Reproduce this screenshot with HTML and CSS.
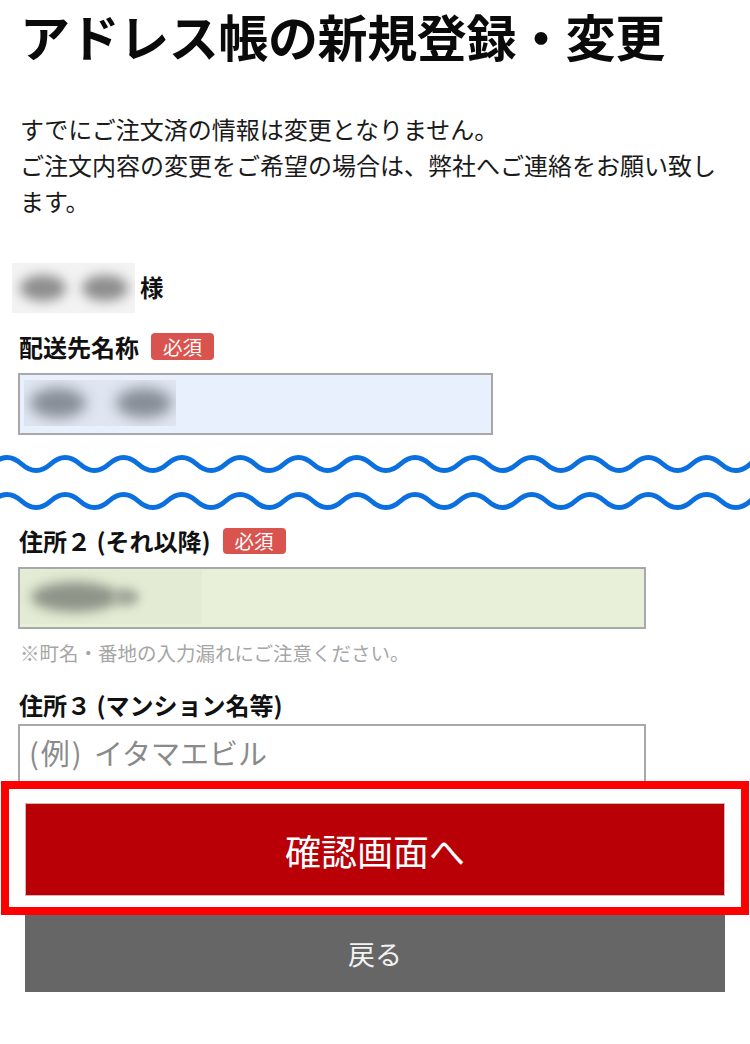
FILE: index.html
```html
<!DOCTYPE html>
<html lang="ja">
<head>
<meta charset="utf-8">
<title>アドレス帳の新規登録・変更</title>
<link rel="stylesheet" href="styles.css">
</head>
<body>
<main class="page">
  <h1 class="title">アドレス帳の新規登録・変更</h1>
  <p class="lead">すでにご注文済の情報は変更となりません。<br>ご注文内容の変更をご希望の場合は、弊社へご連絡をお願い致します。</p>

  <div class="customer">
    <div class="blur-box blur-box--name"><span class="blob blob--name"></span><span class="blob blob--name"></span></div>
    <span class="customer__suffix">様</span>
  </div>

  <div class="field-label field-label--first">
    <span class="field-label__text">配送先名称</span>
    <span class="badge">必須</span>
  </div>
  <div class="control control--autofill control--short">
    <div class="blur-box blur-box--input"><span class="blob blob--input"></span><span class="blob blob--input"></span></div>
  </div>

  <svg class="waves" viewBox="0 0 750 70" width="750" height="70" aria-hidden="true">
    <path d="M-7.6 17 q14.575 -13 29.15 0 t29.15 0 t29.15 0 t29.15 0 t29.15 0 t29.15 0 t29.15 0 t29.15 0 t29.15 0 t29.15 0 t29.15 0 t29.15 0 t29.15 0 t29.15 0 t29.15 0 t29.15 0 t29.15 0 t29.15 0 t29.15 0 t29.15 0 t29.15 0 t29.15 0 t29.15 0 t29.15 0 t29.15 0 t29.15 0 t29.15 0 t29.15 0"/>
    <path d="M-7.6 54 q14.575 -13 29.15 0 t29.15 0 t29.15 0 t29.15 0 t29.15 0 t29.15 0 t29.15 0 t29.15 0 t29.15 0 t29.15 0 t29.15 0 t29.15 0 t29.15 0 t29.15 0 t29.15 0 t29.15 0 t29.15 0 t29.15 0 t29.15 0 t29.15 0 t29.15 0 t29.15 0 t29.15 0 t29.15 0 t29.15 0 t29.15 0 t29.15 0 t29.15 0"/>
  </svg>

  <div class="field-label field-label--second">
    <span class="field-label__text">住所２ (それ以降)</span>
    <span class="badge">必須</span>
  </div>
  <div class="control control--filled control--wide">
    <div class="blur-box blur-box--addr"><span class="blob blob--addr"></span><span class="blob blob--addr-small"></span></div>
  </div>
  <p class="note">※町名・番地の入力漏れにご注意ください。</p>

  <div class="field-label field-label--third">
    <span class="field-label__text">住所３ (マンション名等)</span>
  </div>
  <div class="control control--empty control--wide">
    <span class="placeholder"><span class="placeholder__ex">(例)</span> イタマエビル</span>
  </div>

  <div class="highlight">
    <button class="btn btn--primary" type="button">確認画面へ</button>
  </div>
  <button class="btn btn--back" type="button">戻る</button>
</main>
</body>
</html>
```

FILE: styles.css
```css
html, body {
  margin: 0;
  padding: 0;
  background: #ffffff;
}

body {
  font-family: "Noto Sans CJK JP", "Noto Sans", sans-serif;
  color: #111111;
  width: 750px;
  overflow: hidden;
}

.page {
  display: flex;
  flex-direction: column;
  align-items: flex-start;
}

.title {
  margin: 0;
  padding: 5px 20px 0;
  font-size: 50px;
  line-height: 60px;
  font-weight: 700;
  color: #0a0a0a;
  letter-spacing: -0.4px;
  white-space: nowrap;
}

.lead {
  margin: 46px 0 0;
  padding: 0 30px 0 20px;
  width: 700px;
  font-size: 24px;
  line-height: 36px;
  color: #1a1a1a;
}

.customer {
  margin-top: 44px;
  padding-left: 12px;
  display: flex;
  align-items: center;
  gap: 5px;
}

.customer__suffix {
  font-size: 23.5px;
  font-weight: 700;
  line-height: 1;
  color: #111;
}

.blur-box {
  display: flex;
  align-items: center;
  overflow: hidden;
}

.blur-box--name {
  width: 123px;
  height: 50px;
  background: #f3f3f3;
  padding-left: 8px;
  gap: 16px;
  box-sizing: border-box;
}

.blob {
  display: block;
  border-radius: 50%;
  flex: none;
}

.blob--name {
  width: 46px;
  height: 26px;
  background: #8e8e8e;
  filter: blur(6px);
}

.field-label {
  display: flex;
  align-items: center;
  gap: 12px;
  padding-left: 19px;
  min-height: 27px;
}

.field-label__text {
  font-size: 24px;
  font-weight: 700;
  line-height: 1;
  color: #111;
}

.field-label--first {
  margin-top: 20px;
}

.field-label--second {
  margin-top: 11px;
  min-height: 26px;
}

.field-label--third {
  margin-top: 24px;
}

.badge {
  display: inline-flex;
  align-items: center;
  justify-content: center;
  height: 26px;
  padding: 0 12px;
  border-radius: 4px;
  background: #d9534f;
  color: #ffffff;
  font-size: 19.5px;
  line-height: 1;
  font-weight: 400;
}

.field-label--first .badge {
  height: 27px;
}

.control {
  margin-left: 18px;
  height: 62px;
  box-sizing: border-box;
  border: 2px solid #a8a8a8;
  display: flex;
  align-items: flex-start;
}

.control--short {
  width: 475px;
  margin-top: 13px;
}

.control--wide {
  width: 628px;
}

.control--autofill {
  background: #e8f0fd;
}

.control--filled {
  background: #e8f0d9;
  margin-top: 13px;
}

.control--empty {
  background: #ffffff;
  margin-top: 6px;
  align-items: center;
  padding-left: 9px;
  border-bottom: none;
}

.blur-box--input {
  margin: 5px 0 0 4px;
  width: 152px;
  height: 46px;
  background: #dfe6f1;
  padding-left: 6px;
  gap: 30px;
  box-sizing: border-box;
}

.blob--input {
  width: 56px;
  height: 30px;
  background: #878d96;
  filter: blur(7px);
}

.blur-box--addr {
  margin: 1px 0 0 0;
  width: 182px;
  height: 54px;
  background: #e3ebd4;
  padding-left: 11px;
  gap: 0;
  box-sizing: border-box;
}

.blob--addr {
  width: 88px;
  height: 30px;
  background: #8e9488;
  filter: blur(6px);
}

.blob--addr-small {
  width: 26px;
  height: 18px;
  background: #a3a99b;
  filter: blur(5px);
  margin-left: -6px;
}

.waves {
  display: block;
  margin-top: 12px;
  width: 750px;
  height: 70px;
}

.waves path {
  fill: none;
  stroke: #0b6fdf;
  stroke-width: 5;
  stroke-linecap: round;
}

.note {
  margin: 10px 0 0;
  padding-left: 20px;
  font-size: 19.5px;
  line-height: 28px;
  color: #a6a6a6;
}

.placeholder {
  font-size: 29px;
  line-height: 1;
  color: #8a8a8a;
  margin-top: -8px;
  word-spacing: 4px;
}

.placeholder__ex {
  letter-spacing: 2px;
}

.highlight {
  position: relative;
  z-index: 1;
  margin: -5px 1px 0;
  width: 748px;
  box-sizing: border-box;
  border: 8px solid #ff0000;
  background: #ffffff;
  padding: 14px 16px 11px;
}

.btn {
  display: flex;
  align-items: center;
  justify-content: center;
  width: 100%;
  margin: 0;
  padding: 0;
  border: none;
  font-family: "Noto Sans CJK JP", "Noto Sans", sans-serif;
  cursor: pointer;
}

.btn--primary {
  height: 93px;
  background: #b80006;
  border: 1px solid #d7b3b3;
  color: #ffffff;
  font-size: 36px;
  font-weight: 400;
  box-sizing: border-box;
}

.btn--back {
  margin: 0 25px;
  width: 700px;
  height: 77px;
  background: #666666;
  color: #f2f2f2;
  font-size: 27px;
  font-weight: 400;
}
```
